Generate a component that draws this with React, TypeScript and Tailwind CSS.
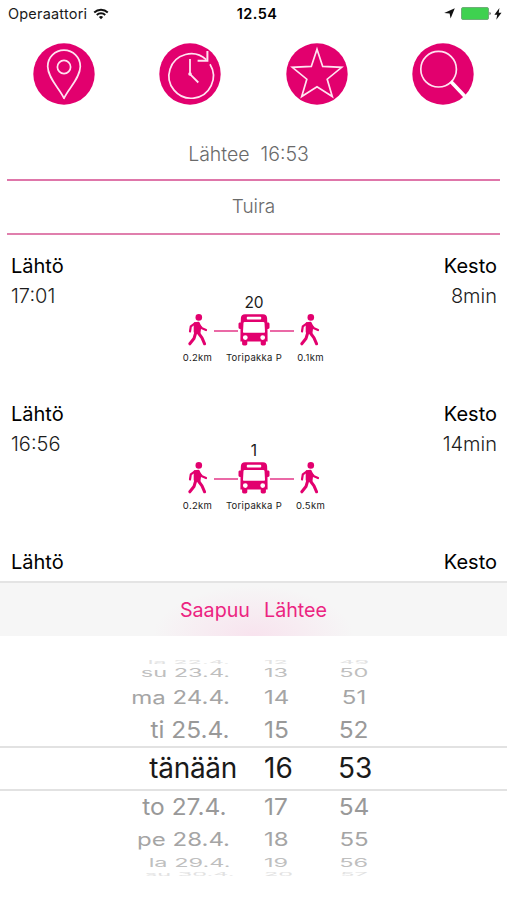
import type { ReactNode } from "react";

const trips = [
  { departure: "17:01", duration: "8min", line: "20", walkStart: "0.2km", stop: "Toripakka P", walkEnd: "0.1km" },
  { departure: "16:56", duration: "14min", line: "1", walkStart: "0.2km", stop: "Toripakka P", walkEnd: "0.5km" },
];

type WheelRowData = { date: string; dateWidth: string; hour: string; minute: string; row: string; scale: string };

// Rows flatten and fade the further they are from the selected one
const rowsBefore: WheelRowData[] = [
  { date: "la 22.4.", dateWidth: "w-[230px]", hour: "12", minute: "49", row: "h-[4px] text-[#e2e2e2]", scale: "scale-x-[0.98] scale-y-[0.2]" },
  { date: "su 23.4.", dateWidth: "w-[230px]", hour: "13", minute: "50", row: "h-[18px] text-[#bfbfbf]", scale: "scale-x-[0.98] scale-y-[0.47]" },
  { date: "ma 24.4.", dateWidth: "w-[230px]", hour: "14", minute: "51", row: "h-[31px] text-[#a5a5a5]", scale: "scale-y-[0.76]" },
  { date: "ti 25.4.", dateWidth: "w-[230px]", hour: "15", minute: "52", row: "h-[34px] text-[#999999]", scale: "scale-x-[1.02] scale-y-[0.95]" },
];

const rowsAfter: WheelRowData[] = [
  { date: "to 27.4.", dateWidth: "mr-[4px] w-[226px]", hour: "17", minute: "54", row: "h-[32px] text-[#999999]", scale: "scale-x-[1.02] scale-y-[0.95]" },
  { date: "pe 28.4.", dateWidth: "w-[230px]", hour: "18", minute: "55", row: "h-[33px] text-[#a5a5a5]", scale: "scale-y-[0.76]" },
  { date: "la 29.4.", dateWidth: "w-[230px]", hour: "19", minute: "56", row: "h-[14px] text-[#bfbfbf]", scale: "scale-x-[0.98] scale-y-[0.47]" },
  { date: "su 30.4.", dateWidth: "w-[234px] -mr-[4px]", hour: "20", minute: "57", row: "h-[8px] text-[#e2e2e2]", scale: "scale-x-[0.98] scale-y-[0.2]" },
];

function StatusBar() {
  return (
    <div className="grid h-7 grid-cols-3 items-center pl-2 pr-1 text-[#1a1a1a]">
      <div className="flex items-center gap-[6px]">
        <span className="text-[14.5px] tracking-[0.2px]">Operaattori</span>
        <svg width="16" height="12" viewBox="0 0 17 12" fill="none" stroke="#111" strokeWidth="2">
          <path d="M1.3 4.4a10.2 10.2 0 0 1 14.4 0" />
          <path d="M4 7.1a6.4 6.4 0 0 1 9 0" />
          <path d="M8.5 11.5 6.2 9.2a3.3 3.3 0 0 1 4.6 0z" fill="#111" stroke="none" />
        </svg>
      </div>
      <span className="pl-[3px] text-center text-[14.5px] font-semibold tracking-[0.4px] text-black">12.54</span>
      <div className="flex items-center justify-end">
        <svg width="11" height="11" viewBox="0 0 11 11" className="-mt-px mr-[6px]">
          <path d="M10.8.2 6.6 10.6 5.6 5.6.2 4.9z" fill="#111" />
        </svg>
        <svg width="32" height="13" viewBox="0 0 32 13" className="-mt-px">
          <rect x=".5" y=".5" width="27" height="12" rx="1.5" fill="#3fd150" stroke="#6fae78" />
          <path d="M28.6 4.8a2 2 0 0 1 0 3.400z" fill="#222" />
        </svg>
        <svg width="8" height="12" viewBox="0 0 8 12" className="ml-px mr-px -mt-px">
          <path d="M5.4 0 .4 6.800h2.800l-.9 5 5.200-7H4.700z" fill="#111" />
        </svg>
      </div>
    </div>
  );
}

function RoundButton({ label, children }: { label: string; children: ReactNode }) {
  return (
    <button aria-label={label} className="size-[62px]">
      <svg width="62" height="62" viewBox="0 0 62 62" fill="none" stroke="#ffe3f1" strokeWidth="1.7" strokeLinejoin="round">
        <circle cx="31" cy="31" r="30.7" fill="#e2006e" stroke="none" />
        {children}
      </svg>
    </button>
  );
}

function TopNav() {
  return (
    <nav className="mt-[15px] flex justify-between px-[33px]">
      <RoundButton label="Sijainti">
        <path d="M31 55.3C27 46 14.7 35 14.7 23.5a16.3 16.3 0 0 1 32.6 0C47.3 35 35 46 31 55.3z" />
        <circle cx="31" cy="24" r="6.6" />
      </RoundButton>
      <RoundButton label="Aika">
        <path d="M47.2 16.7A22.2 22.2 0 1 0 51 21.3" />
        <path d="M48.4 8v9.8h-9.8" strokeLinejoin="miter" strokeWidth="2" />
        <path d="M31 16v15.2l8.3 8.3" strokeWidth="1.8" />
        <circle cx="31" cy="31" r="1.8" fill="#ffe3f1" stroke="none" />
      </RoundButton>
      <RoundButton label="Suosikit">
        <path d="M31 6.2 36.7 23.4 55.7 24.3 41.2 36.2 46.3 53.5 31 43.8 15.7 53.5 20.8 36.2 6.3 24.3 25.3 23.4z" strokeLinejoin="miter" />
      </RoundButton>
      <RoundButton label="Haku">
        <circle cx="26.6" cy="26.2" r="17.8" />
        <path d="m38.8 38.6 14 14.6" strokeWidth="3.6" stroke="#fff" />
      </RoundButton>
    </nav>
  );
}

function WalkIcon() {
  return (
    <svg width="22" height="32" viewBox="0 0 22 32" fill="none" stroke="#e2006e" strokeLinecap="round" strokeLinejoin="round">
      <circle cx="11.8" cy="3.4" r="3.3" fill="#e2006e" stroke="none" />
      <path d="M7.6 9.2 11.6 8.6 13.4 12.5 12.6 19 7.6 18z" fill="#e2006e" strokeWidth="1.8" />
      <path d="M8 9.4 3.8 12.4 3 17.5" strokeWidth="2.2" />
      <path d="m13 12 2 2.2 4 1.8" strokeWidth="2.2" />
      <path d="M8.8 18.5 7 24.5 2.8 29.8" strokeWidth="3" />
      <path d="m11.4 19 3.6 4.8 2.6 6" strokeWidth="3" />
    </svg>
  );
}

function BusIcon() {
  return (
    <svg width="32" height="32" viewBox="0 0 32 32">
      <path
        fill="#e2006e"
        fillRule="evenodd"
        d="M7 .3h18c2.6 0 4 1.4 4.1 3.8l.2 4.5h.7c.9 0 1.5.6 1.5 1.4v3.6c0 .8-.6 1.4-1.4 1.4h-.6l.1 12.6h-1.7v2.2c0 .9-.7 1.6-1.6 1.6h-2c-.9 0-1.6-.7-1.6-1.6v-2.2H9.3v2.2c0 .9-.7 1.6-1.6 1.6h-2c-.9 0-1.6-.7-1.6-1.6v-2.2H2.4L2.5 15h-.6c-.8 0-1.4-.6-1.4-1.4V10c0-.8.6-1.4 1.5-1.4h.7l.2-4.5C3 1.7 4.4.3 7 .3zM9.6 2.7c-.5 0-.8.3-.8.8v1.2c0 .5.3.8.8.8h12.8c.5 0 .8-.3.8-.8V3.5c0-.5-.3-.8-.8-.8zM6.6 8c-.6 0-1 .4-1.1 1L5 17.7c0 .7.4 1.1 1 1.1h20c.6 0 1-.4 1-1.1L26.5 9c-.1-.6-.5-1-1.1-1zM7.3 21.2a2.4 2.4 0 1 0 0 4.8 2.4 2.4 0 0 0 0-4.8zM24.7 21.2a2.4 2.4 0 1 0 0 4.8 2.4 2.4 0 0 0 0-4.8z"
      />
    </svg>
  );
}

function Trip({ trip }: { trip: (typeof trips)[number] }) {
  return (
    <article className="h-[148px] pl-[11px] pr-[10px]">
      <div className="flex justify-between text-[20px] leading-[30px] text-black">
        <span>Lähtö</span>
        <span>Kesto</span>
      </div>
      <div className="flex justify-between text-[20px] font-[350] leading-[30px] text-[#1c1c1c]">
        <span>{trip.departure}</span>
        <span>{trip.duration}</span>
      </div>
      <div className="-mt-[18px] flex flex-col items-center text-[#1a1a1a]">
        <span className="text-[15.5px] leading-[20px]">{trip.line}</span>
        <div className="mt-px flex items-center">
          <WalkIcon />
          <span className="ml-[5px] mt-[2px] h-[2px] w-6 bg-[#ea69a6]" />
          <BusIcon />
          <span className="mr-[5px] mt-[2px] h-[2px] w-6 bg-[#ea69a6]" />
          <WalkIcon />
        </div>
        <div className="mt-[5px] grid grid-cols-[50px_63px_50px] text-center text-[9.5px] leading-[14px] tracking-[0.3px]">
          <span>{trip.walkStart}</span>
          <span>{trip.stop}</span>
          <span>{trip.walkEnd}</span>
        </div>
      </div>
    </article>
  );
}

function WheelRow({ data }: { data: WheelRowData }) {
  return (
    <div className={`flex items-center text-[24px] leading-none ${data.row}`}>
      <span className={`flex justify-end ${data.dateWidth}`}>
        <span className={`origin-right whitespace-nowrap ${data.scale}`}>{data.date}</span>
      </span>
      <span className="ml-[34px] flex w-[30px]">
        <span className={`origin-left ${data.scale}`}>{data.hour}</span>
      </span>
      <span className="ml-[43px] flex w-[34px] justify-center">
        <span className={data.scale}>{data.minute}</span>
      </span>
    </div>
  );
}

function DatePicker() {
  return (
    <section className="h-[264px] bg-white pt-6">
      {rowsBefore.map((r) => (
        <WheelRow key={r.date} data={r} />
      ))}
      <div className="-mt-px flex h-[45px] items-center border-y-2 border-[#e2e2e2] pb-px text-[28px] text-[#1a1a1a]">
        <span className="w-[237px] text-right tracking-[-0.3px]">tänään</span>
        <span className="ml-[27px] w-[34px]">16</span>
        <span className="ml-[40px]">53</span>
      </div>
      {rowsAfter.map((r) => (
        <WheelRow key={r.date} data={r} />
      ))}
    </section>
  );
}

export default function App() {
  return (
    <main className="flex h-[900px] w-[507px] flex-col overflow-hidden bg-white font-[Inter,sans-serif]">
      <StatusBar />
      <TopNav />
      <div className="mx-[7px] mt-[21px] flex h-[55px] items-center justify-center border-b-2 border-[#df76aa] pr-[10px] pt-[4px] text-[19.5px] font-[350] text-[#6a6a6a]">
        <span className="whitespace-pre">Lähtee  16:53</span>
      </div>
      <div className="mx-[7px] flex h-[54px] items-center justify-center border-b-2 border-[#e07fad] text-[19px] font-[350] text-[#6a6a6a]">
        Tuira
      </div>
      <div className="mt-[16px] h-[330px] overflow-hidden">
        {trips.map((trip) => (
          <Trip key={trip.departure} trip={trip} />
        ))}
        <div className="flex justify-between pl-[11px] pr-[10px] text-[20px] leading-[30px] text-black">
          <span>Lähtö</span>
          <span>Kesto</span>
        </div>
      </div>
      <div className="flex h-[55px] items-center justify-center gap-[14px] border-t-2 border-[#e4e4e4] bg-[#f6f6f6] bg-[radial-gradient(ellipse_100px_50px_at_50%_100%,#f8e3ee,#f6f6f6)] pt-[2px] text-[19.7px] text-[#ec2481]">
        <span>Saapuu</span>
        <span>Lähtee</span>
      </div>
      <DatePicker />
    </main>
  );
}
